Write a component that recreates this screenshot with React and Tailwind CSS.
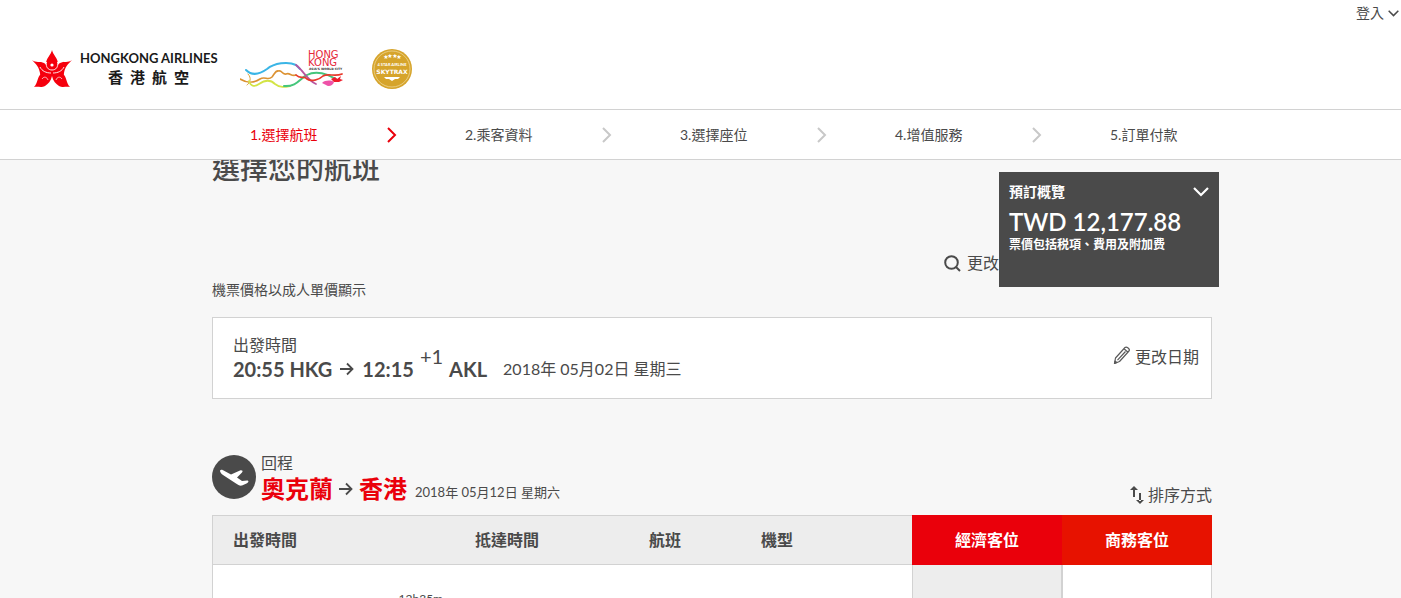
import React from 'react';

const steps = ['1.選擇航班', '2.乘客資料', '3.選擇座位', '4.增值服務', '5.訂單付款'];

const AirlineLogo = () => (
  <a href="#home" aria-label="Hong Kong Airlines" className="block">
    <svg width="188" height="42" viewBox="0 0 188 42">
      <g fill="#f5000d">
        <path d="M20 1 C21 6 26 9 26 15 L26 19 L20 24 L14 19 L14 15 C14 9 19 6 20 1Z" />
        <path d="M0 11 C4 14 8 12 12 14 C15 16 16 20 20 22 L20 26 L14 29 C10 28 8 27 8 24 C7 18 4 15 0 11Z" />
        <path d="M40 11 C36 14 32 12 28 14 C25 16 24 20 20 22 L20 26 L26 29 C30 28 32 27 32 24 C33 18 36 15 40 11Z" />
        <path d="M2 38 C6 34 5 28 9 25 L20 23 L20 27 C19 32 16 35 13 37 C9 39 6 37 2 38Z" />
        <path d="M38 38 C34 34 35 28 31 25 L20 23 L20 27 C21 32 24 35 27 37 C31 39 34 37 38 38Z" />
      </g>
      <g stroke="#fff" fill="none" strokeWidth="0.9">
        <path d="M14.5 13 C13.5 18 16 21 20 21 C24 21 26.5 18 25.5 13" />
        <path d="M8 18 C10 22 14 24 19 24 M32 18 C30 22 26 24 21 24" />
        <path d="M10 30 C12 27 15 28 16 31 M30 30 C28 27 25 28 24 31" strokeWidth="0.7" />
      </g>
      <circle cx="20" cy="16" r="1.6" fill="#fff" />
      <text x="48" y="14" fontSize="13" fontWeight="700" fill="#1a1a1a" fontFamily="Lato, sans-serif">HONGKONG AIRLINES</text>
      <g fontSize="15" fontWeight="700" fill="#1a1a1a" fontFamily="'Noto Sans CJK TC', sans-serif">
        <text x="76" y="34">香</text>
        <text x="98" y="34">港</text>
        <text x="120" y="34">航</text>
        <text x="142" y="34">空</text>
      </g>
    </svg>
  </a>
);

const BrandLogo = () => (
  <svg width="104" height="42" viewBox="0 0 104 42" role="img" aria-label="Hong Kong, Asia's World City">
    <g fill="none" strokeLinecap="round" strokeLinejoin="round">
      <path d="M0 30 C5 33 13 35 20 30 C25 27 28 32 32 28 C35 24 36 21 39 22 C42 21 42 26 46 25 C50 23 51 28 56 26" stroke="#dc9232" strokeWidth="1.6" />
      <path d="M8 25 C12 29 10 34 7 36" stroke="#dca53e" strokeWidth="1" />
      <path d="M9 32 C11 38 15 38 19 35 C25 31 30 30 35 35 C40 39 45 38 50 37" stroke="#d3e446" strokeWidth="1.8" />
      <path d="M44 37 C57 38 60 29 67 26 C76 21 88 25 96 30" stroke="#45c67c" strokeWidth="2" />
      <path d="M6 21 C12 27 20 25 27 20 C34 14 48 12 56 16 L60 20" stroke="#3ab5e6" strokeWidth="2" />
      <path d="M56 16 C63 21 67 31 76 35" stroke="#b9559f" strokeWidth="1.8" />
      <path d="M56 26 C61 31 64 26 67 30 C71 33 79 31 83 27 C88 24 95 28 102 25" stroke="#e83a2c" strokeWidth="1.7" />
    </g>
    <path d="M82 34 C85 31 91 31 94 33 C93 37 88 38 86 36 Z" fill="#ee52a8" />
    <path d="M91 30 L95 28 L97 30 L101 27 L100 30 L103 31 L99 33 L94 33 Z" fill="#ef1c2b" />
    <g fontSize="10" fill="#e6283a" fontFamily="'DejaVu Sans', sans-serif">
      <text x="68" y="9">HONG</text>
      <text x="68" y="17">KONG</text>
    </g>
    <text x="69" y="21" fontSize="3" fontWeight="700" fill="#333" fontFamily="'DejaVu Sans', sans-serif">ASIA'S WORLD CITY</text>
  </svg>
);

const SkytraxBadge = () => (
  <svg width="40" height="40" viewBox="0 0 40 40" role="img" aria-label="Skytrax 4 Star Airline">
    <circle cx="20" cy="20" r="20" fill="#d6a42b" />
    <circle cx="20" cy="20" r="18" fill="none" stroke="#f1dca4" strokeWidth="0.7" />
    <g fill="#fff" textAnchor="middle">
      <text x="14" y="10" fontSize="6" fontFamily="'DejaVu Sans', sans-serif">★</text>
      <text x="18" y="9" fontSize="6" fontFamily="'DejaVu Sans', sans-serif">★</text>
      <text x="23" y="9" fontSize="6" fontFamily="'DejaVu Sans', sans-serif">★</text>
      <text x="27" y="10" fontSize="6" fontFamily="'DejaVu Sans', sans-serif">★</text>
      <text x="20" y="17" fontSize="4" fontWeight="700" fontFamily="Lato, sans-serif">4 STAR AIRLINE</text>
      <text x="20" y="25" fontSize="6" fontWeight="700" fontFamily="'DejaVu Sans', sans-serif">SKYTRAX</text>
    </g>
    <path d="M12 28 H28 L26 30 H23 L20 32 L17 30 H14Z" fill="#fff" />
  </svg>
);

const Chevron = ({ className }) => (
  <svg viewBox="0 0 10 16" className={className} fill="none" stroke="currentColor" strokeWidth="2">
    <path d="M1 1 L8 8 L1 15" />
  </svg>
);

const ChevronDown = ({ className }) => (
  <svg viewBox="0 0 16 10" className={className} fill="none" stroke="currentColor" strokeWidth="2.2">
    <path d="M1 1 L8 8 L15 1" />
  </svg>
);

const Arrow = () => (
  <svg width="14" height="14" viewBox="0 0 14 14" fill="none" stroke="#4a4a4a" strokeWidth="1.8" className="shrink-0">
    <path d="M0 7 H12 M7 1.5 L12.5 7 L7 12.5" />
  </svg>
);

const FlightCard = () => (
  <section className="mt-[17px] flex items-center justify-between border border-[#d2d2d2] bg-white pt-[15px] pr-3 pb-[17px] pl-5">
    <div>
      <div className="leading-6">出發時間</div>
      <div className="flex h-6 items-center text-xl leading-[22px]">
        <strong>20:55 HKG</strong>
        <span className="mx-2"><Arrow /></span>
        <strong>12:15</strong>
        <span className="-mt-3 ml-1.5 self-start">+1</span>
        <strong className="ml-1.5">AKL</strong>
        <span className="ml-4 text-base">2018年 05月02日 星期三</span>
      </div>
    </div>
    <button type="button" className="flex items-center gap-1 leading-6">
      <svg width="18" height="20" viewBox="0 0 18 20" fill="none" stroke="#5a5a5a" strokeWidth="1.2" strokeLinejoin="round" className="-mt-1">
        <path d="M1.5 18.5 L2.5 13 L12 2.5 C13.5 1 17.5 4 16 6 L6.5 16.5 Z M11 3.8 L15 7.2 M12.5 6.5 L4.5 15.2" />
        <path d="M1.5 18.5 L2 16 L3.8 17.5Z" fill="#5a5a5a" />
      </svg>
      更改日期
    </button>
  </section>
);

const FlightTable = () => (
  <table className="mt-3 w-full table-fixed border-separate border-spacing-0 text-left">
    <colgroup>
      <col className="w-[24.2%]" />
      <col className="w-[17.4%]" />
      <col className="w-[11.2%]" />
      <col className="w-[17.2%]" />
      <col className="w-[15%]" />
      <col className="w-[15%]" />
    </colgroup>
    <thead>
      <tr className="h-[50px]">
        <th className="border-y border-l border-[#d2d2d2] bg-[#ededed] pl-5">出發時間</th>
        <th className="border-y border-[#d2d2d2] bg-[#ededed] pl-[21px]">抵達時間</th>
        <th className="border-y border-[#d2d2d2] bg-[#ededed] pl-[21px]">航班</th>
        <th className="border-y border-[#d2d2d2] bg-[#ededed] pl-[21px]">機型</th>
        <th className="bg-[#ea000b] text-center text-white">經濟客位</th>
        <th className="bg-[#e71200] text-center text-white">商務客位</th>
      </tr>
    </thead>
    <tbody>
      <tr className="h-[100px] align-top">
        <td className="border-l border-[#d2d2d2] bg-white pt-6 pr-[11px] text-right text-xs leading-5">12h35m</td>
        <td className="bg-white" />
        <td className="bg-white" />
        <td className="bg-white" />
        <td className="border-r border-l border-[#d2d2d2] bg-[#ededed]" />
        <td className="border-r border-l border-[#d2d2d2] bg-white" />
      </tr>
    </tbody>
  </table>
);

const App = () => {
  return (
    <div className="flex h-screen flex-col overflow-hidden bg-[#f7f7f7] font-['Lato','Noto_Sans_CJK_TC',sans-serif] text-base text-[#4a4a4a]">
      {/* Header */}
      <header className="z-10 shrink-0 bg-white">
        <div className="flex justify-end pt-0.5 pr-0.5">
          <button type="button" className="flex items-center gap-1 text-sm leading-[22px]">
            登入
            <ChevronDown className="h-[7px] w-[11px]" />
          </button>
        </div>
        <div className="flex items-start pt-[25px] pb-[18px] pl-8">
          <AirlineLogo />
          <div className="ml-5"><BrandLogo /></div>
          <div className="ml-7"><SkytraxBadge /></div>
        </div>
        <nav className="border-y border-[#d2d2d2] pl-[23px]">
          <ol className="mx-auto flex max-w-[1000px] pl-[38px] text-sm leading-[49px]">
            {steps.map((step, i) => (
              <li key={step} className={`flex w-[215px] shrink-0 items-center ${i === 0 ? 'text-[#ea000b]' : ''}`}>
                <span className="w-[137px]">{step}</span>
                {i < steps.length - 1 && (
                  <Chevron className={`h-4 w-2.5 ${i === 0 ? 'text-[#ea000b]' : 'text-[#c8c8c8]'}`} />
                )}
              </li>
            ))}
          </ol>
        </nav>
      </header>

      <main className="pl-[23px]">
        <div className="relative mx-auto max-w-[1000px]">
          <h1 className="-mt-3 text-[28px] leading-10 font-medium">選擇您的航班</h1>

          <div className="mt-[63px] flex justify-end pr-[213px]">
            <button type="button" className="flex items-center gap-1.5 leading-6">
              <svg width="17" height="17" viewBox="0 0 17 17" fill="none" stroke="#4a4a4a" strokeWidth="2">
                <circle cx="7.5" cy="7.5" r="6.3" />
                <path d="M12 12 L16 16" />
              </svg>
              更改
            </button>
          </div>
          <p className="mt-[5px] text-sm leading-5">機票價格以成人單價顯示</p>

          <FlightCard />

          {/* Return flight */}
          <section className="mt-[52px]">
            <div className="flex items-end justify-between">
              <div className="flex items-center gap-[5px]">
                <svg width="44" height="44" viewBox="0 0 44 44">
                  <circle cx="22" cy="22" r="22" fill="#4a4a4a" />
                  <path d="M8 15.5 C9 14 11 15 12.5 16 L19 19.5 L28 15.5 C30 15 31.5 16 30 17.5 L25 22.5 L30 26 L35 25.5 C37 25.5 37 27.5 34.5 28.5 L30 30.5 C28 31 26 30 24 28.5 L11 20 C9 18.5 8 17 8 15.5Z" fill="#fff" />
                </svg>
                <div>
                  <div className="leading-6">回程</div>
                  <div className="flex items-center text-2xl leading-7">
                    <strong className="text-[#ea000b]">奧克蘭</strong>
                    <span className="mx-1.5"><Arrow /></span>
                    <strong className="text-[#ea000b]">香港</strong>
                    <span className="ml-2 pt-1.5 text-[13px] leading-5">2018年 05月12日 星期六</span>
                  </div>
                </div>
              </div>
              <button type="button" className="mb-[-4px] flex items-center gap-1 leading-6">
                <svg width="14" height="18" viewBox="0 0 14 18" fill="#4a4a4a">
                  <path d="M3 3h2v8H3z M4 0 L8 4 H0Z" />
                  <path d="M9 7h2v8H9z M10 18 L14 14 H6Z" />
                </svg>
                排序方式
              </button>
            </div>
            <FlightTable />
          </section>

          {/* Booking summary floats over the page */}
          <aside className="absolute top-6 right-[-7px] h-[115px] w-[220px] bg-[#4a4a4a] px-2.5 pt-2.5 text-white">
            <button type="button" className="flex w-full items-center justify-between text-sm leading-5 font-bold">
              預訂概覽
              <ChevronDown className="h-[10px] w-4" />
            </button>
            <div className="mt-1 text-2xl leading-8 font-semibold">TWD 12,177.88</div>
            <div className="-mt-px text-xs leading-4 font-bold">票價包括税項、費用及附加费</div>
          </aside>
        </div>
      </main>
    </div>
  );
};

export default App;
